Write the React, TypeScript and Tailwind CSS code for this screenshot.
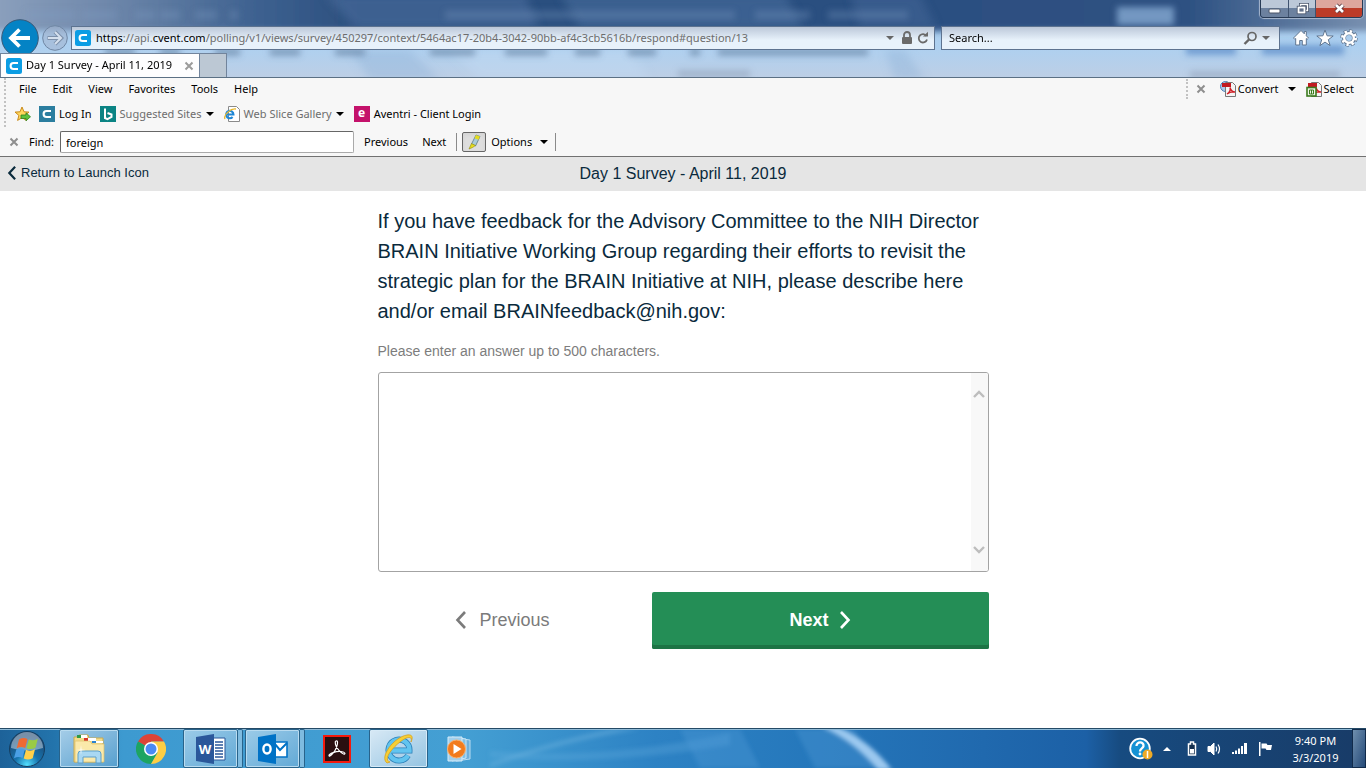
import { useState } from 'react';
import type { ReactNode } from 'react';

const PAGE_URL =
  'https://api.cvent.com/polling/v1/views/survey/450297/context/5464ac17-20b4-3042-90bb-af4c3cb5616b/respond#question/13';

const MENUS = ['File', 'Edit', 'View', 'Favorites', 'Tools', 'Help'];

function Caret({ className = 'text-black' }: { className?: string }) {
  return (
    <svg width="8" height="4" viewBox="0 0 8 4" className={className} aria-hidden="true">
      <path d="M0 0h8L4 4z" fill="currentColor" />
    </svg>
  );
}

function SmallCross({ className }: { className: string }) {
  return (
    <svg width="10" height="10" viewBox="0 0 10 10" className={className} aria-hidden="true">
      <path d="M1.5 1.5l7 7M8.5 1.5l-7 7" stroke="currentColor" strokeWidth="2" />
    </svg>
  );
}

function CventIcon({ fill, square = false }: { fill: string; square?: boolean }) {
  return (
    <svg width="16" height="16" viewBox="0 0 16 16" className="shrink-0" aria-hidden="true">
      <rect width="16" height="16" rx={square ? 0 : 2.5} fill={fill} />
      <path d="M12 5H7.6a3 3 0 0 0 0 6H12" fill="none" stroke="#fff" strokeWidth="2.1" />
    </svg>
  );
}

/* ---------- window frame ---------- */

function GlassBackdrop() {
  return (
    <svg
      className="absolute inset-0 h-full w-full"
      viewBox="0 0 1366 77"
      preserveAspectRatio="none"
      aria-hidden="true"
    >
      <defs>
        <linearGradient id="titleBlue" x1="0" x2="1" y1="0" y2="0">
          <stop offset="0" stopColor="#8fa3bf" />
          <stop offset=".09" stopColor="#6f88ab" />
          <stop offset=".2" stopColor="#3c608f" />
          <stop offset=".27" stopColor="#2c4f7e" />
          <stop offset=".86" stopColor="#2d5182" />
          <stop offset="1" stopColor="#8096b4" />
        </linearGradient>
        <linearGradient id="lowerBlue" x1="0" x2="0" y1="0" y2="1">
          <stop offset="0" stopColor="#a9cbee" />
          <stop offset=".6" stopColor="#add0f0" />
          <stop offset="1" stopColor="#bdcfe6" />
        </linearGradient>
        <filter id="soft" x="-10%" y="-60%" width="120%" height="220%">
          <feGaussianBlur stdDeviation="4" />
        </filter>
        <filter id="softer" x="-10%" y="-60%" width="120%" height="220%">
          <feGaussianBlur stdDeviation="3" />
        </filter>
      </defs>
      <rect width="1366" height="77" fill="url(#lowerBlue)" />
      <rect x="-20" y="-20" width="1406" height="51" fill="url(#titleBlue)" filter="url(#softer)" />
      <g filter="url(#soft)">
        <path d="M325 -6h200l14 34H355z" fill="#476a99" opacity=".7" />
        <path d="M560 -6h225l18 34H580z" fill="#476a99" opacity=".65" />
        <path d="M850 -6h70l16 34h-76z" fill="#476a99" opacity=".5" />
        <path d="M350 50h60l30 30h-70zM885 50h20l20 30h-30z" fill="#8fb2d8" opacity=".4" />
        <path d="M450 50h180l20 30h-170z" fill="#c3dcf4" opacity=".4" />
      </g>
      <g filter="url(#softer)">
        <path
          d="M25 15h50M82 15h35M135 15h20M160 15h20M195 15h22M230 15h8M445 15h290M755 15h55M828 15h80"
          stroke="#7e9cc4"
          strokeWidth="9"
          opacity=".3"
        />
        <rect x="1117" y="7" width="57" height="18" fill="#86a9d2" opacity=".8" />
        <path
          d="M105 52h30M160 52h20M215 52h25M270 52h30M335 52h30M430 52h45M505 52h42M575 52h25M628 52h28M690 52h10M718 52h150"
          stroke="#5d789c"
          strokeWidth="7"
          opacity=".6"
        />
        <path d="M1186 50h50M1262 50h82" stroke="#5f8fca" strokeWidth="10" opacity=".75" />
        <path d="M678 74h72M1190 75h150" stroke="#8b9db5" strokeWidth="8" opacity=".5" />
      </g>
    </svg>
  );
}

function WindowControls() {
  return (
    <div className="absolute top-0 right-[3px] flex h-[18px] overflow-hidden rounded-b border border-t-0 border-[#283b56] shadow-[0_0_1px_1px_#a9b9cf]">
      <button aria-label="Minimize" className="flex w-7 items-center justify-center border-r border-[#40536f] bg-linear-to-b from-[#bcc8d8] from-50% to-[#6c819f] to-50%">
        <svg width="13" height="6" viewBox="0 0 13 6" className="mt-1">
          <rect x="1" y="1" width="11" height="4" rx="1" fill="#fff" stroke="#4a5568" />
        </svg>
      </button>
      <button aria-label="Restore" className="flex w-[27px] items-center justify-center border-r border-[#40536f] bg-linear-to-b from-[#bcc8d8] from-50% to-[#6c819f] to-50%">
        <svg width="13" height="12" viewBox="0 0 13 12" fill="none">
          <path d="M4.5 3V1.5h7v6H10" stroke="#47536a" strokeWidth="3" />
          <path d="M4.5 3V1.5h7v6H10" stroke="#fff" strokeWidth="1.4" />
          <rect x="2.5" y="4.5" width="6" height="5" stroke="#47536a" strokeWidth="3.4" />
          <rect x="2.5" y="4.5" width="6" height="5" fill="#65738c" stroke="#fff" strokeWidth="1.8" />
        </svg>
      </button>
      <button aria-label="Close" className="flex w-[46px] items-center justify-center bg-linear-to-b from-[#dda69d] from-50% to-[#bc3b28] to-50%">
        <svg width="13" height="11" viewBox="0 0 13 11">
          <path d="M3 2l7 7M10 2l-7 7" stroke="#5e3b42" strokeWidth="4.4" />
          <path d="M3 2l7 7M10 2l-7 7" stroke="#fff" strokeWidth="2.6" />
        </svg>
      </button>
    </div>
  );
}

function AddressBar() {
  const [editing, setEditing] = useState(false);
  const [url, setUrl] = useState(PAGE_URL);
  const [, scheme, sub, domain, rest] = url.match(/^(\w+)(:\/\/(?:\w+\.)?)(\w+\.\w+)(.*)$/) ?? ['', '', '', '', url];

  return (
    <div className="flex h-6 min-w-0 flex-1 items-center border border-[#5d7390] bg-linear-to-b from-[#bcc8d9] to-[#e8f2fb] to-60% pl-[3px]">
      <CventIcon fill="#0b9de4" />
      {editing ? (
        <input
          autoFocus
          aria-label="Address"
          value={url}
          onChange={(e) => setUrl(e.target.value)}
          onBlur={() => setEditing(false)}
          className="ml-[5px] min-w-0 flex-1 bg-transparent text-[11px] outline-none"
        />
      ) : (
        <button
          onClick={() => setEditing(true)}
          className="ml-[5px] min-w-0 flex-1 cursor-text overflow-hidden text-left text-[11px] whitespace-nowrap text-[#6d6d6d]"
        >
          <span className="text-black">{scheme}</span>
          {sub}
          <span className="text-black">{domain}</span>
          {rest}
        </button>
      )}
      <button aria-label="Show address history" className="p-1">
        <Caret className="text-[#666]" />
      </button>
      <svg width="12" height="14" viewBox="0 0 12 14" className="ml-[3px] shrink-0" aria-label="Secure site">
        <path d="M3 6V4a3 3 0 0 1 6 0v2" fill="none" stroke="#6a6a6a" strokeWidth="1.8" />
        <rect x="1" y="6" width="10" height="7" rx="1" fill="#6a6a6a" />
      </svg>
      <button aria-label="Refresh" className="mr-[5px] ml-1">
        <svg width="12" height="14" viewBox="0 0 12 14" fill="none">
          <path d="M9.5 5A4.2 4.2 0 1 0 10 8.500" stroke="#6a6a6a" strokeWidth="1.8" />
          <path d="M6 5.500h5V.8z" fill="#6a6a6a" />
        </svg>
      </button>
    </div>
  );
}

function BrowserFrame() {
  return (
    <header className="relative border-b border-[#5b7084]">
      <GlassBackdrop />
      <WindowControls />
      <div className="relative flex items-center pt-[19px] pl-px">
        <button aria-label="Back" className="shrink-0">
          <svg width="38" height="38" viewBox="0 0 38 38">
            <circle cx="19" cy="19" r="18.300" fill="#0483c5" stroke="#3b5876" />
            <path d="M29 19H11M18.500 10.500L10 19l8.500 8.500" fill="none" stroke="#fff" strokeWidth="3.800" />
          </svg>
        </button>
        <button aria-label="Forward" className="ml-[3px] shrink-0">
          <svg width="26" height="26" viewBox="0 0 26 26">
            <circle cx="13" cy="13" r="12.300" fill="#a3b6d0" fillOpacity=".6" stroke="#6f86a3" />
            <path d="M5.500 13h13M13 6.800l6.200 6.200-6.200 6.200" fill="none" stroke="#7d90aa" strokeWidth="4" />
            <path d="M6 13h13M13 7l6 6-6 6" fill="none" stroke="#d5e0ee" strokeWidth="2" />
          </svg>
        </button>
        <div className="ml-[3px] flex min-w-0 flex-1">
          <AddressBar />
        </div>
        <div className="ml-1.5 flex h-6 w-[339px] shrink-0 items-center border border-[#5d7390] bg-linear-to-b from-[#bcc8d9] to-[#e8f2fb] to-60% px-[7px]">
          <input
            aria-label="Search the web"
            placeholder="Search..."
            className="min-w-0 flex-1 bg-transparent text-[11px] outline-none placeholder:text-black"
          />
          <button aria-label="Search">
            <svg width="15" height="14" viewBox="0 0 15 14" fill="none" stroke="#666">
              <circle cx="9" cy="5.500" r="4" strokeWidth="1.700" />
              <path d="M6 8.500L1.500 13" strokeWidth="2.400" />
            </svg>
          </button>
          <button aria-label="Search options" className="mr-0.5 ml-1">
            <Caret className="text-[#666]" />
          </button>
        </div>
        <div className="mr-2 ml-3 flex shrink-0 gap-1.5">
          <button aria-label="Home">
            <svg width="18" height="18" viewBox="0 0 18 18">
              <path d="M9 1.500L1.500 9l1.300 1.300.9-.8V16h4v-4.500h2.600V16h4V9.500l.9.800L16.500 9l-2.200-2.200V2.500h-2v2.300z" fill="#fff" stroke="#5f7590" />
            </svg>
          </button>
          <button aria-label="Favorites list">
            <svg width="18" height="18" viewBox="0 0 18 18">
              <path d="M9 1l2.100 5.800 6.100.2-4.900 3.700 1.800 5.900L9 13.100l-5.100 3.500 1.800-5.900L.8 7l6.100-.2z" fill="#fff" stroke="#5f7590" />
            </svg>
          </button>
          <button aria-label="Settings">
            <svg width="18" height="18" viewBox="0 0 18 18" fill="none">
              <circle cx="9" cy="9" r="6.700" stroke="#5f7590" strokeWidth="4" strokeDasharray="3.200 2.060" />
              <circle cx="9" cy="9" r="5" stroke="#5f7590" strokeWidth="4" />
              <circle cx="9" cy="9" r="6.500" stroke="#fff" strokeWidth="3" strokeDasharray="2.300 2.800" />
              <circle cx="9" cy="9" r="4.800" stroke="#fff" strokeWidth="2.400" />
            </svg>
          </button>
        </div>
      </div>
      <div className="relative -mt-1 flex h-6">
        <div className="flex w-[200px] items-center border border-b-0 border-[#71849c] bg-[#fdfdfe] pl-[5px]">
          <CventIcon fill="#0b9de4" />
          <span className="ml-1 flex-1 text-[11px] whitespace-nowrap">Day 1 Survey - April 11, 2019</span>
          <button aria-label="Close tab" className="mr-[5px]">
            <SmallCross className="text-[#9b9b9b]" />
          </button>
        </div>
        <button aria-label="New tab" className="w-[27px] border border-b-0 border-l-0 border-[#71849c] bg-[#bcc8d4]" />
      </div>
    </header>
  );
}

/* ---------- toolbars ---------- */

function PdfIcon({ select = false }: { select?: boolean }) {
  return (
    <svg width="16" height="16" viewBox="0 0 16 16" aria-hidden="true">
      {!select && <circle cx="5.500" cy="5.500" r="5" fill="#a9c7e9" stroke="#4d7db5" />}
      <path d="M5.500 1.500h7l3 3v11h-10z" fill="#f4f4f4" stroke="#777" />
      <rect x="2" y="2" width="9" height="4" fill="#c11920" />
      <path d="M7 13c3-2 3.500-5 3-6.500 1 3.500 3 4.500 5 4.500-3-.5-6 .5-8 2z" fill="none" stroke="#cf2027" strokeWidth="1.400" />
      {select && (
        <>
          <rect x="1" y="6.500" width="9" height="8.500" fill="#eef6e6" stroke="#3b7a1e" strokeWidth="1.600" />
          <path d="M3.500 9h4v4h-4zM5.500 9v4" fill="none" stroke="#3b7a1e" />
        </>
      )}
    </svg>
  );
}

function Grip({ className }: { className: string }) {
  return <div className={`w-0 border-l-2 border-dotted border-[#c2c2c2] ${className}`} />;
}

function Toolbars() {
  const [find, setFind] = useState('foreign');

  return (
    <div className="border-b border-[#717171] bg-[#f7f7f7] text-[11px] text-black">
      <div className="flex">
        <Grip className="ml-1 h-[49px]" />
        <div className="flex-1">
          <div className="flex h-[22px] items-center pr-3 pl-[13px]">
            <nav className="flex flex-1 gap-4">
              {MENUS.map((name) => (
                <button key={name}>{name}</button>
              ))}
            </nav>
            <Grip className="h-5" />
            <button aria-label="Close toolbar" className="ml-2">
              <SmallCross className="text-[#8e8e8e]" />
            </button>
            <button className="ml-3.5 flex items-center gap-0.5">
              <PdfIcon />
              Convert
            </button>
            <button aria-label="Convert options" className="mr-2.5 ml-2.5">
              <Caret />
            </button>
            <button className="flex items-center gap-px">
              <PdfIcon select />
              Select
            </button>
          </div>

          <div className="flex h-7 items-center pl-2">
            <button aria-label="Add to favorites bar">
              <svg width="17" height="16" viewBox="0 0 17 16">
                <path d="M8 1l2 4.800 5 .3-3.900 3.300 1.300 5L8 11.700 3.600 14.400l1.300-5L1 6.100l5-.3z" fill="#ffd75e" stroke="#c98a1b" />
                <path d="M7 9h5V6.800l4.500 4-4.500 4v-2.300H7z" fill="#5dc13c" stroke="#2d8120" strokeWidth=".8" />
              </svg>
            </button>
            <a href="#login" className="ml-2 flex items-center gap-1">
              <CventIcon fill="#2b7e9f" square />
              Log In
            </a>
            <button className="ml-2 flex items-center gap-1 text-[#6d6d6d]">
              <svg width="16" height="16" viewBox="0 0 16 16">
                <rect width="16" height="16" fill="#0b8484" />
                <path d="M5 2.500v9.500l2.500 1.200 4-2.200V8.500L7.500 7" fill="none" stroke="#fff" strokeWidth="2" />
              </svg>
              Suggested Sites
              <Caret />
            </button>
            <button className="ml-2.5 flex items-center gap-1 text-[#6d6d6d]">
              <svg width="16" height="16" viewBox="0 0 16 16" fill="none">
                <path d="M4.500.5h8l3 3v12h-11z" fill="#fff" stroke="#8a8a8a" />
                <path d="M2 8.500h7.500A3.700 3.700 0 1 0 8.600 11" stroke="#1e87d6" strokeWidth="2" />
                <path d="M1 13C-1 9 7 2 12 3" stroke="#e9b92f" strokeWidth="1.300" />
              </svg>
              Web Slice Gallery
              <Caret />
            </button>
            <a href="#aventri" className="ml-2.5 flex items-center gap-1">
              <span className="flex size-4 items-center justify-center bg-[#c4126b] pb-0.5 text-[12px] font-bold text-white">e</span>
              Aventri - Client Login
            </a>
          </div>
        </div>
      </div>

      <div className="flex h-7 items-center pl-[9px]">
        <button aria-label="Close find bar">
          <SmallCross className="text-[#8e8e8e]" />
        </button>
        <label htmlFor="find" className="ml-2.5 w-[31px]">
          Find:
        </label>
        <input
          id="find"
          value={find}
          onChange={(e) => setFind(e.target.value)}
          className="h-[22px] w-[294px] rounded-xs border border-[#aaa] border-t-[#666] border-l-[#666] bg-white px-[5px] outline-none"
        />
        <button className="ml-2.5">Previous</button>
        <button className="ml-3.5">Next</button>
        <div className="ml-2.5 h-[18px] w-px bg-[#8a8a8a]" />
        <button aria-label="Highlight all matches" className="ml-[5px] flex h-5 w-6 items-center justify-center rounded-xs border border-[#666] bg-[#dedede] shadow-inner">
          <svg width="14" height="16" viewBox="0 0 14 16">
            <path d="M9 1l4 1.500L8.500 12 4.500 10z" fill="#a8cbd8" stroke="#5a7885" strokeWidth=".8" />
            <path d="M9 1l4 1.500-1.500 3.300-4-1.500z" fill="#e5dc1e" />
            <path d="M4.500 9.500l4 2-3 2L2 15z" fill="#e5dc1e" stroke="#8f8c14" strokeWidth=".6" />
          </svg>
        </button>
        <button className="ml-[5px] flex items-center gap-2">
          Options
          <Caret />
        </button>
        <div className="ml-[7px] h-[18px] w-px bg-[#8a8a8a]" />
      </div>
    </div>
  );
}

/* ---------- survey ---------- */

function Chevron({ dir, width, height, stroke }: { dir: 'left' | 'right'; width: number; height: number; stroke: number }) {
  return (
    <svg width={width} height={height} viewBox="0 0 12 18" fill="none" aria-hidden="true">
      <path d={dir === 'left' ? 'M10 1L2.500 9l7.500 8' : 'M2 1l7.500 8L2 17'} stroke="currentColor" strokeWidth={stroke} />
    </svg>
  );
}

function Survey() {
  const [answer, setAnswer] = useState('');

  return (
    <main className="flex-1 bg-white font-['Liberation_Sans',Arial,sans-serif] text-[#0a2a3c]">
      <div className="grid h-[34px] grid-cols-[1fr_auto_1fr] items-center bg-[#e5e5e5]">
        <a href="#launch" className="flex items-center gap-1 pb-0.5 pl-[7px] text-[13px]">
          <Chevron dir="left" width={10} height={14} stroke={2.8} />
          Return to Launch Icon
        </a>
        <h1 className="text-base">Day 1 Survey - April 11, 2019</h1>
      </div>

      <form className="mx-auto max-w-[611px] pt-[15px]" onSubmit={(e) => e.preventDefault()}>
        <label htmlFor="answer" className="block text-[20px] leading-[30px]">
          If you have feedback for the Advisory Committee to the NIH Director BRAIN Initiative Working Group
          regarding their efforts to revisit the strategic plan for the BRAIN Initiative at NIH, please describe
          here and/or email BRAINfeedback@nih.gov:
        </label>
        <p id="hint" className="mt-[15px] text-sm text-[#7d7d7d]">
          Please enter an answer up to 500 characters.
        </p>
        <div className="mt-[11px] flex h-[200px] overflow-hidden rounded-[3px] border border-[#a3a3a3]">
          <textarea
            id="answer"
            aria-describedby="hint"
            maxLength={500}
            value={answer}
            onChange={(e) => setAnswer(e.target.value)}
            className="flex-1 resize-none p-3 text-base outline-none"
          />
          <div className="flex w-[17px] flex-col items-center justify-between bg-[#f8f8f8] py-[17px] text-[#bdbdbd]">
            <svg width="12" height="8" viewBox="0 0 12 8" fill="none">
              <path d="M1 7l5-5 5 5" stroke="currentColor" strokeWidth="2.400" />
            </svg>
            <svg width="12" height="8" viewBox="0 0 12 8" fill="none">
              <path d="M1 1l5 5 5-5" stroke="currentColor" strokeWidth="2.400" />
            </svg>
          </div>
        </div>
        <div className="mt-5 flex h-[57px] gap-6">
          <button type="button" className="flex flex-1 items-center justify-center gap-3 pb-0.5 text-lg text-[#7b7b7b]">
            <Chevron dir="left" width={12} height={18} stroke={2.6} />
            Previous
          </button>
          <button
            type="submit"
            className="flex w-[337px] items-center justify-center gap-2.5 rounded-xs bg-[#248e56] pb-0.5 text-lg font-bold text-white shadow-[inset_0_-4px_0_#1d7445]"
          >
            Next
            <Chevron dir="right" width={12} height={18} stroke={2.6} />
          </button>
        </div>
      </form>
    </main>
  );
}

/* ---------- taskbar ---------- */

function TaskButton({ label, className, children }: { label: string; className: string; children: ReactNode }) {
  return (
    <button aria-label={label} className={`flex h-full shrink-0 items-center justify-center ${className}`}>
      {children}
    </button>
  );
}

const OPEN_APP = 'rounded-xs border border-[#28638b] bg-linear-to-br from-[#a5cde8] to-[#559fce] shadow-[inset_0_0_0_1px_#b8dbf0]';
const STACKED_APP = 'rounded-xs border border-[#28638b] bg-linear-to-br from-[#9bcbe8] to-[#62a9d6] shadow-[inset_0_0_0_1px_#b8dbf0]';

function Taskbar() {
  return (
    <footer className="relative h-10 border-t border-[#254a66] text-white">
      <svg className="absolute inset-0 h-full w-full" viewBox="0 0 1366 39" preserveAspectRatio="none" aria-hidden="true">
        <defs>
          <linearGradient id="bar" x1="0" x2="1" y1="0" y2="0">
            <stop offset="0" stopColor="#1d6299" />
            <stop offset=".04" stopColor="#2374ac" />
            <stop offset=".09" stopColor="#3d9ad0" />
            <stop offset=".34" stopColor="#449fd3" />
            <stop offset=".48" stopColor="#2d82c4" />
            <stop offset=".6" stopColor="#2577bb" />
            <stop offset=".72" stopColor="#2069ae" />
            <stop offset=".795" stopColor="#1c60a6" />
            <stop offset=".82" stopColor="#174b80" />
            <stop offset="1" stopColor="#183b67" />
          </linearGradient>
          <filter id="barSoft" x="-20%" y="-20%" width="140%" height="140%">
            <feGaussianBlur stdDeviation="2" />
          </filter>
        </defs>
        <rect width="1366" height="39" fill="url(#bar)" />
        <g filter="url(#barSoft)">
          <path d="M490 38C530 24 580 10 640 0h-28C570 8 530 20 490 34z" fill="#78b9e2" opacity=".4" />
          <path d="M490 22q110 10 240-18v12q-130 22-240 12z" fill="#6eb2e2" opacity=".25" />
          <path d="M680 0h60l20 39h-60zM795 0h60l20 39h-60z" fill="#4f9bd8" opacity=".35" />
          <path d="M822 -2h16q32 14 54 43h-14q-24-29-56-43z" fill="#a9d1f5" opacity=".9" />
        </g>
        <path d="M0 .5h1366" stroke="#8fbbd8" />
      </svg>

      <div className="relative flex h-full items-center">
        <TaskButton label="Start" className="w-[54px]">
          <svg width="38" height="38" viewBox="0 0 38 38">
            <defs>
              <radialGradient id="orb" cx=".5" cy=".95" r=".85">
                <stop offset="0" stopColor="#53e0ff" />
                <stop offset=".4" stopColor="#1673ae" />
                <stop offset="1" stopColor="#1e466f" />
              </radialGradient>
            </defs>
            <circle cx="19" cy="19" r="17.500" fill="url(#orb)" stroke="#153e60" />
            <path d="M3 18a16 16 0 0 1 32 0q-16 5-32 0z" fill="#fff" opacity=".4" />
            <path d="M11 9.500q4.500-2.500 8.500-.5l-2.300 9q-4-2-8.500.2z" fill="#ee6a33" />
            <path d="M20.800 9.500q4.500 2 9-.8l-2.300 9q-4.500 2.500-9 .5z" fill="#9acb45" />
            <path d="M8.300 19.500q4.500-2 8.500-.2l-2.300 8.700q-4-2-8.500.2z" fill="#4a9fe5" />
            <path d="M18 19.800q4.500 2 9-.6l-2.300 9q-4.500 2.500-9 .3z" fill="#ffd04a" />
          </svg>
        </TaskButton>
        <TaskButton label="Windows Explorer" className={`ml-[5px] w-[60px] ${OPEN_APP}`}>
          <svg width="34" height="32" viewBox="0 0 34 32">
            <path d="M2 4h4l1-2h9l1 3h14v24H2z" fill="#f3dc8c" stroke="#c9a94e" />
            <path d="M5 2h10v3H5z" fill="#fff" />
            <path d="M5 2h4v3H5z" fill="#2e9a46" />
            <path d="M12 5h12v3H12z" fill="#fff" />
            <path d="M12 5h4v3h-4z" fill="#d6372c" />
            <path d="M20 8h11v2H20z" fill="#fff" />
            <path d="M20 8h4v2h-4z" fill="#2c82cf" />
            <path d="M3 8h15l2 3h12v18H3z" fill="#fae9aa" stroke="#dcc06a" strokeWidth=".7" />
            <path d="M6 30V21q0-3 3-3h17q3 0 3 3v9h-5v-6H11v6z" fill="#a9d8f2" stroke="#5c9fc9" />
            <path d="M9 12l.6 4.400 4.400.6-4.400.6L9 22l-.6-4.400L4 17l4.400-.6z" fill="#fff" opacity=".85" />
          </svg>
        </TaskButton>
        <TaskButton label="Chrome" className="w-16">
          <svg width="30" height="30" viewBox="0 0 30 30">
            <path d="M15 15L2 7.500A15 15 0 0 1 28 7.500H15z" fill="#dc4437" />
            <path d="M15 15l6.500 3.800L15 30A15 15 0 0 1 2 7.500z" fill="#1da462" />
            <path d="M15 7.500h13A15 15 0 0 1 15 30l6.500-11.200z" fill="#fdce44" />
            <circle cx="15" cy="15" r="7" fill="#fff" />
            <circle cx="15" cy="15" r="5.500" fill="#4a8af4" />
          </svg>
        </TaskButton>
        <div className="flex h-full">
          <TaskButton label="Word" className={`w-[55px] ${STACKED_APP}`}>
            <svg width="30" height="30" viewBox="0 0 30 30">
              <path d="M17 4h12v22H17z" fill="#fff" stroke="#2b579a" />
              <path d="M19 8h8M19 11h8M19 14h8M19 17h8M19 20h8M19 23h8" stroke="#2b579a" strokeWidth="1.300" />
              <path d="M0 3l18-3v30L0 27z" fill="#2b579a" />
              <text x="9" y="20" textAnchor="middle" fontSize="13" fontWeight="700" fill="#fff">W</text>
            </svg>
          </TaskButton>
          <div className="h-full w-[5px] rounded-r-xs border border-l-0 border-[#28638b] bg-[#7ebbe0]" />
        </div>
        <div className="ml-0.5 flex h-full">
          <TaskButton label="Outlook" className={`w-[55px] ${STACKED_APP}`}>
            <svg width="30" height="30" viewBox="0 0 30 30">
              <path d="M16 8h13v15H16z" fill="#fff" stroke="#0072c6" strokeWidth="1.600" />
              <path d="M16 9l6 7 7-7" fill="none" stroke="#0072c6" strokeWidth="2" />
              <path d="M0 3l18-3v30L0 27z" fill="#0072c6" />
              <ellipse cx="9" cy="15" rx="3.600" ry="4.500" fill="none" stroke="#fff" strokeWidth="2.400" />
            </svg>
          </TaskButton>
          <div className="h-full w-[5px] rounded-r-xs border border-l-0 border-[#28638b] bg-[#7ebbe0]" />
        </div>
        <TaskButton label="Acrobat Reader" className="w-[64px]">
          <svg width="28" height="28" viewBox="0 0 28 28">
            <rect x="1" y="1" width="26" height="26" fill="#2a0f10" stroke="#f3190d" strokeWidth="2" />
            <path
              d="M13 6c3-1 1 6-1 9.500S6 22.500 6 20.500s7-4.500 12-4 4.500 3 2.500 2.500S13 13 12.500 9.500 12.500 6 13 6z"
              fill="none"
              stroke="#fff"
              strokeWidth="1.200"
            />
          </svg>
        </TaskButton>
        <TaskButton
          label="Internet Explorer"
          className="w-[59px] rounded-xs border border-[#28638b] bg-linear-to-br from-[#d8e9f5] to-[#94c4e2] shadow-[inset_0_0_0_1px_#d6eaf7]"
        >
          <svg width="34" height="34" viewBox="0 0 34 34" fill="none">
            <path d="M9 18.500h18.500A10.500 10.500 0 1 0 26 23.500" stroke="#2c80b9" strokeWidth="6" />
            <path d="M9 18.500h18.500A10.500 10.500 0 1 0 26 23.500" stroke="#62c4ef" strokeWidth="4.400" />
            <path d="M5 31C-3 25 12 5 25 3c6-1 6 3 4 7 2-7-5-5-11 0C9 17 1 28 8 30z" fill="#f6cf35" stroke="#d29a1b" strokeWidth=".7" />
          </svg>
        </TaskButton>
        <TaskButton label="Windows Media Player" className="w-[62px]">
          <svg width="26" height="28" viewBox="0 0 26 28">
            <path d="M10 3l14 2v19l-14 2z" fill="#6eb0dc" stroke="#b9dcf1" />
            <path d="M6 2l14 2v19L6 26z" fill="#83c0e5" stroke="#cbe6f6" />
            <path d="M2 2h14v24H2z" fill="#a1cfec" stroke="#d6ecf9" />
            <circle cx="10.500" cy="14" r="9" fill="#f27b1d" stroke="#f9b06f" />
            <path d="M7.500 9v10l8-5z" fill="#fff" />
          </svg>
        </TaskButton>

        <div className="ml-auto flex h-full items-center">
          <button aria-label="Help" className="mr-2.5">
            <svg width="24" height="24" viewBox="0 0 24 24">
              <circle cx="11" cy="11.500" r="9.800" fill="#1592d4" stroke="#fff" strokeWidth="1.800" />
              <path d="M7.500 9c0-5 7.500-4.500 7 0-.3 2.500-3.500 2.500-3.500 5.500" fill="none" stroke="#fff" strokeWidth="2.300" />
              <circle cx="11" cy="17" r="1.400" fill="#fff" />
              <circle cx="18.500" cy="17.500" r="5" fill="#eeaa26" />
              <path d="M18.500 14v7" stroke="#fff" strokeWidth="1.500" />
            </svg>
          </button>
          <button aria-label="Show hidden icons" className="mr-4">
            <svg width="8" height="4" viewBox="0 0 8 4">
              <path d="M0 4h8L4 0z" fill="#fff" />
            </svg>
          </button>
          <svg width="10" height="15" viewBox="0 0 10 15" className="mr-2.5" aria-label="Battery">
            <path d="M3.500 1h3v2h2v11h-7V3h2z" fill="#15304f" stroke="#fff" strokeWidth="1.500" />
            <path d="M3 8h4v4.500H3z" fill="#fff" />
          </svg>
          <svg width="15" height="14" viewBox="0 0 15 14" className="mr-2.5" fill="none" stroke="#fff" aria-label="Volume">
            <path d="M1 4.500h2.500L7 1v12L3.500 9.500H1z" fill="#fff" />
            <path d="M9 4.500q1.500 2.500 0 5M11 2.500q3 4.500 0 9" strokeWidth="1.200" />
          </svg>
          <svg width="16" height="13" viewBox="0 0 16 13" className="mr-2.5" aria-label="Network">
            <path d="M0 10h2v2H0zM3 8.500h2V12H3zM6 6.500h2V12H6zM9 4h2v8H9zM12 1h3v11h-3z" fill="#fff" />
          </svg>
          <svg width="15" height="14" viewBox="0 0 15 14" className="mr-4" aria-label="Action Center">
            <path d="M1 0h1.500v14H1zM3.500 1.500h5l1 1.500H14l-1 5H8.500l-1-1.500h-4z" fill="#fff" />
          </svg>
          <button className="mr-2.5 w-[53px] text-center text-[11px] leading-[17px] whitespace-nowrap">
            9:40 PM
            <br />
            3/3/2019
          </button>
          <button
            aria-label="Show desktop"
            className="h-full w-3.5 border border-[#112b4b] bg-linear-to-br from-[#6f8fae] to-[#254a78]"
          />
        </div>
      </div>
    </footer>
  );
}

export default function App() {
  return (
    <div className="flex min-h-screen flex-col font-['Noto_Sans','Open_Sans',sans-serif]">
      <BrowserFrame />
      <Toolbars />
      <Survey />
      <Taskbar />
    </div>
  );
}
